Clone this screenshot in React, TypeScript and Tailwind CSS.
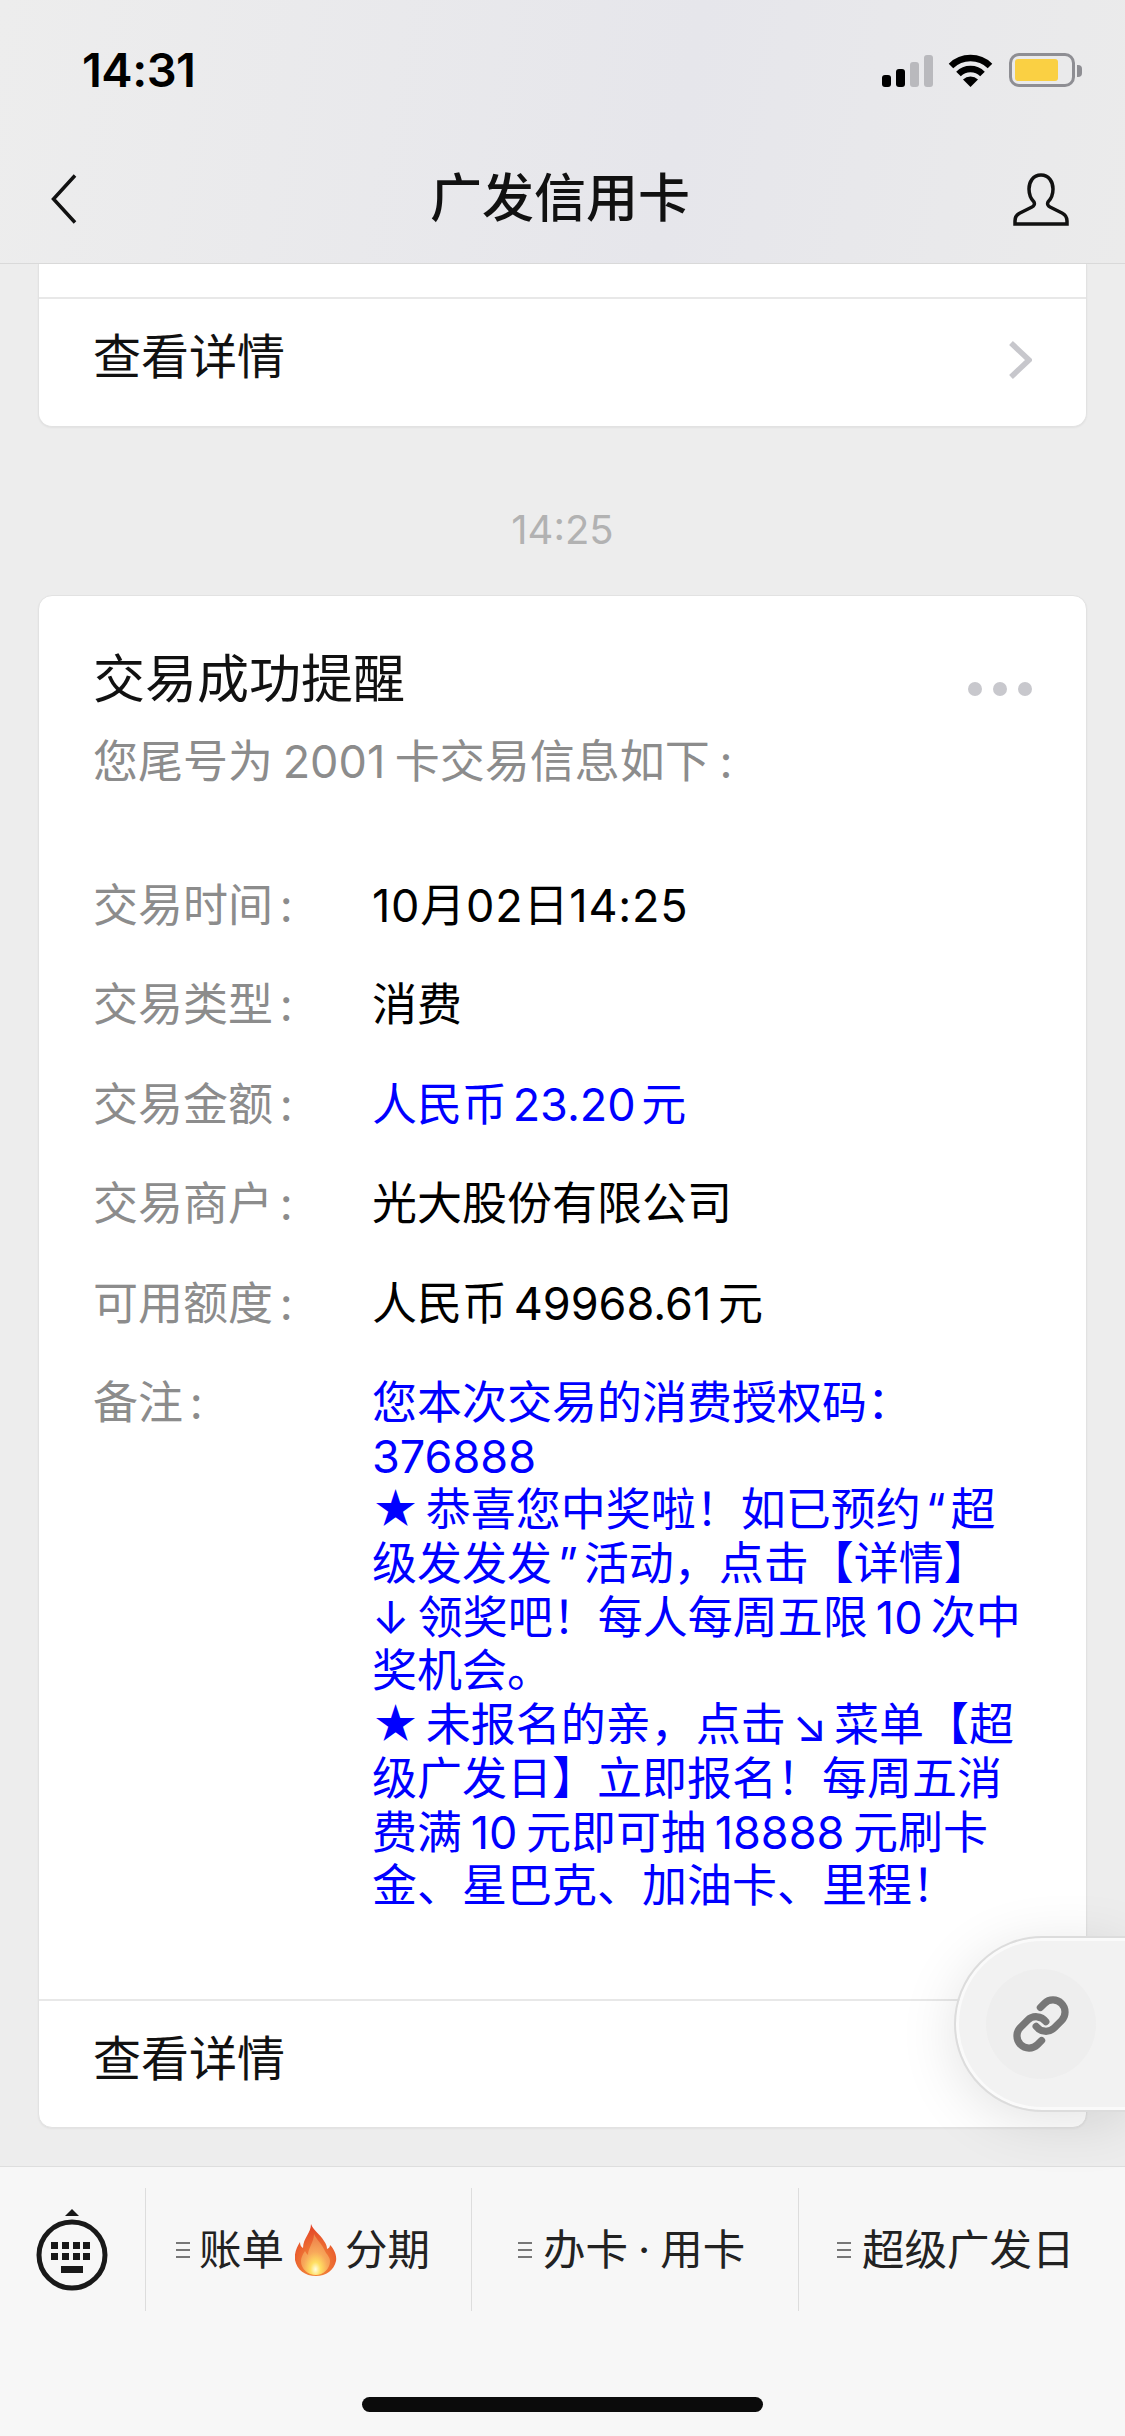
import React from 'react';
import { Link } from 'lucide-react';

const rows = [
  { label: '交易时间', value: '10月02日14:25', color: 'text-black tracking-[0.8px]' },
  { label: '交易类型', value: '消费', color: 'text-black' },
  { label: '交易金额', value: '人民币 23.20 元', color: 'text-[#0000ff] [word-spacing:-7px]' },
  { label: '交易商户', value: '光大股份有限公司', color: 'text-black' },
  { label: '可用额度', value: '人民币 49968.61 元', color: 'text-black [word-spacing:-6px]' },
];

function Remark() {
  return (
    <div className="text-[#0000ff] whitespace-nowrap">
      <div>您本次交易的消费授权码：</div>
      <div>376888</div>
      <div>★ 恭喜您中奖啦！如已预约<span className="mx-[5px]">“</span>超</div>
      <div>级发发发<span className="mx-[6px]">”</span>活动，点击【详情】</div>
      <div className="[word-spacing:-4.5px]">↓ 领奖吧！每人每周五限 10 次中</div>
      <div>奖机会。</div>
      <div>★ 未报名的亲，点击 ↘ 菜单【超</div>
      <div>级广发日】立即报名！每周五消</div>
      <div className="[word-spacing:-4px]">费满 10 元即可抽 18888 元刷卡</div>
      <div>金、星巴克、加油卡、里程！</div>
    </div>
  );
}

function StatusIcons() {
  return (
    <div className="flex items-end h-[34px]">
      <div className="flex items-end gap-[5px]">
        <div className="w-[9px] h-[12px] rounded-[3px] bg-black" />
        <div className="w-[9px] h-[18px] rounded-[3px] bg-black" />
        <div className="w-[9px] h-[25px] rounded-[3px] bg-[#b9b9bd]" />
        <div className="w-[9px] h-[32px] rounded-[3px] bg-[#b9b9bd]" />
      </div>
      <svg width="45" height="33" viewBox="0 0 45 33" className="ml-[15px]">
        <path d="M3 12 A28 28 0 0 1 42 12" fill="none" stroke="#000" strokeWidth="6.5" />
        <path d="M10.5 20 A17 17 0 0 1 34.5 20" fill="none" stroke="#000" strokeWidth="6.5" />
        <path d="M22.5 33 L15 25.5 A11 11 0 0 1 30 25.5 Z" fill="#000" />
      </svg>
      <div className="ml-[16px] w-[66px] h-[34px] rounded-[10px] border-[3px] border-[#8e8e93] p-[3px]">
        <div className="w-[43px] h-full rounded-[3px] bg-[#fad043]" />
      </div>
      <div className="ml-[2px] mb-[10px] w-[5px] h-[12px] rounded-r-[4px] bg-[#8e8e93]" />
    </div>
  );
}

function Flame() {
  return (
    <svg width="42" height="52" viewBox="0 0 42 52" className="block">
      <defs>
        <radialGradient id="flameOuter" cx="50%" cy="80%" r="80%">
          <stop offset="0%" stopColor="#f79a3e" />
          <stop offset="100%" stopColor="#e23f26" />
        </radialGradient>
        <radialGradient id="flameInner" cx="50%" cy="86%" r="70%">
          <stop offset="0%" stopColor="#fffde0" />
          <stop offset="25%" stopColor="#ffdf62" />
          <stop offset="60%" stopColor="#f8a85a" />
          <stop offset="100%" stopColor="#f08a4e" />
        </radialGradient>
      </defs>
      <path
        d="M16 0 C18 6 25 10 29 17 C31 20 32 22 32 25 C34 24 35 23 35 21 C39 25 42 31 41 37 C39 46 31 52 21 52 C10 52 2 46 0 36 C-1 29 2 23 5 18 C5 21 6 23 8 24 C8 14 16 9 16 0 Z"
        fill="url(#flameOuter)"
      />
      <path
        d="M19 10 C21 15 27 20 30 27 C32 31 35 33 35 37 C35 45 28 51 21 51 C13 51 6 45 6 37 C6 33 8 30 10 27 C11 29 12 30 13 31 C13 24 19 18 19 10 Z"
        fill="url(#flameInner)"
      />
    </svg>
  );
}

function MenuLines() {
  return (
    <div className="flex flex-col gap-[5px] w-[14px] shrink-0">
      <div className="h-[2px] bg-[#777]" />
      <div className="h-[2px] bg-[#777]" />
      <div className="h-[2px] bg-[#777]" />
    </div>
  );
}

export default function App() {
  return (
    <div className="relative w-[1125px] h-[2436px] overflow-hidden flex flex-col bg-[#ededed] font-['Inter','Noto_Sans_CJK_SC',sans-serif]">
      {/* status + nav */}
      <div className="h-[264px] shrink-0 border-b border-[#d9d9d9] bg-[linear-gradient(100deg,#ededed,#e6e6eb_60%,#ebebeb)]">
        <div className="h-[140px] flex items-center justify-between pl-[82px] pr-[43px]">
          <span className="text-[47px] font-semibold tracking-[-0.5px] text-black">14:31</span>
          <StatusIcons />
        </div>
        <div className="h-[118px] grid grid-cols-[1fr_auto_1fr] items-center pl-[51px] pr-[56px]">
          <svg width="26" height="50" viewBox="0 0 26 50">
            <path d="M24 1.5 L2.5 25 L24 48.5" fill="none" stroke="#111" strokeWidth="3.5" />
          </svg>
          <div className="text-[52px] leading-[60px] font-medium text-[#111]">广发信用卡</div>
          <svg width="56" height="53" viewBox="0 0 56 53" className="justify-self-end">
            <path
              d="M28 2 C20 2 16 9 16 16 C16 22 18 26 21 29 C22 31 21 33 19 34 L7 40 C3 42 2 45 2 48 L2 51 L54 51 L54 48 C54 45 53 42 49 40 L37 34 C35 33 34 31 35 29 C38 26 40 22 40 16 C40 9 36 2 28 2 Z"
              fill="none"
              stroke="#111"
              strokeWidth="3.5"
            />
          </svg>
        </div>
      </div>

      {/* messages */}
      <div className="flex-1 min-h-0 px-[38px] overflow-hidden">
        <div className="h-[163px] bg-white rounded-b-[14px] border-x border-b border-[#e2e2e2] pt-[33px] shadow-[0_1px_2px_rgba(0,0,0,0.05)]">
          <div className="h-[128px] border-t-2 border-[#e8e8e8] flex items-center justify-between pl-[54px] pr-[54px] pb-[10px]">
            <span className="text-[48px] leading-[60px] text-[#111]">查看详情</span>
            <svg width="24" height="38" viewBox="0 0 24 38" className="mt-[6px]">
              <path d="M3 2 L21 19 L3 36" fill="none" stroke="#c7c7cc" strokeWidth="5.5" />
            </svg>
          </div>
        </div>

        <div className="pt-[78px] h-[168px] text-center text-[40px] leading-[50px] text-[#b2b2b2]">14:25</div>

        <div className="relative h-[1533px] bg-white rounded-[14px] border border-[#e2e2e2] flex flex-col shadow-[0_1px_2px_rgba(0,0,0,0.05)]">
          <div className="flex-1 pl-[54px] pr-[54px] pt-[54px] [word-spacing:-6px]">
            <div className="flex justify-between items-center">
              <div className="text-[52px] leading-[60px] text-[#111]">交易成功提醒</div>
              <div className="flex gap-[11px] mt-[18px]">
                <div className="w-[14px] h-[14px] rounded-full bg-[#c8c8cd]" />
                <div className="w-[14px] h-[14px] rounded-full bg-[#c8c8cd]" />
                <div className="w-[14px] h-[14px] rounded-full bg-[#c8c8cd]" />
              </div>
            </div>
            <div className="mt-[22px] text-[45px] leading-[60px] text-[#8c8c8c] [word-spacing:-3px]">您尾号为 2001 卡交易信息如下 :</div>

            <div className="mt-[87px] flex flex-col gap-[45.4px]">
              {rows.map((row) => (
                <div key={row.label} className="flex text-[45px] leading-[54px]">
                  <div className="w-[279px] shrink-0 text-[#8c8c8c]">{row.label} :</div>
                  <div className={row.color}>{row.value}</div>
                </div>
              ))}
              <div className="flex text-[45px] leading-[53.7px]">
                <div className="w-[279px] shrink-0 text-[#8c8c8c]">备注 :</div>
                <Remark />
              </div>
            </div>
          </div>
          <div className="h-[128px] shrink-0 border-t-2 border-[#e8e8e8] flex items-center pl-[54px] pb-[10px]">
            <span className="text-[48px] leading-[60px] text-[#111]">查看详情</span>
          </div>
        </div>
      </div>

      {/* bottom menu */}
      <div className="relative h-[270px] shrink-0 bg-[#f7f7f7] border-t border-[#dedede] flex flex-col">
        <div className="mt-[21px] h-[123px] flex items-center text-[42.5px] leading-[50px] text-[#222] [word-spacing:-2px]">
          <div className="w-[145px] h-full shrink-0 flex items-center justify-center pr-[2px]">
            <svg width="74" height="84" viewBox="0 0 74 84">
              <path d="M30 8 L37 1 L44 8 Z" fill="#191919" />
              <circle cx="37" cy="47" r="33" fill="none" stroke="#191919" strokeWidth="5" />
              {[16, 27, 38, 48].map((x) => (
                <rect key={x} x={x} y="34" width="7" height="7" fill="#191919" />
              ))}
              {[16, 27, 38, 48].map((x) => (
                <rect key={x} x={x} y="45" width="7" height="7" fill="#191919" />
              ))}
              <rect x="26" y="58" width="22" height="7" fill="#191919" />
            </svg>
          </div>
          <div className="w-[326px] h-full shrink-0 border-l border-[#dddddd] flex items-center pl-[30px]">
            <MenuLines />
            <span className="ml-[9px]">账单</span>
            <span className="ml-[11px]"><Flame /></span>
            <span className="ml-[8px]">分期</span>
          </div>
          <div className="w-[327px] h-full shrink-0 border-l border-[#dddddd] flex items-center pl-[46px]">
            <MenuLines />
            <span className="ml-[11px]">办卡 · 用卡</span>
          </div>
          <div className="flex-1 h-full border-l border-[#dddddd] flex items-center pl-[38px]">
            <MenuLines />
            <span className="ml-[11px]">超级广发日</span>
          </div>
        </div>
        <div className="mt-auto mb-[24px] mx-auto w-[401px] h-[15px] rounded-full bg-[#0b0b0b]" />
      </div>

      {/* floating link button */}
      <div className="absolute left-[956px] top-[1938px] w-[172px] h-[172px] rounded-l-[86px] bg-[#f2f2f2] border-[3px] border-[#fafafa] outline-2 outline-[#dcdcdc] shadow-[0_10px_60px_rgba(0,0,0,0.12)] flex items-center pl-[27px]">
        <div className="w-[110px] h-[110px] rounded-full bg-[#eeeeee] flex items-center justify-center">
          <Link size={58} strokeWidth={3} color="#777777" />
        </div>
      </div>
    </div>
  );
}
